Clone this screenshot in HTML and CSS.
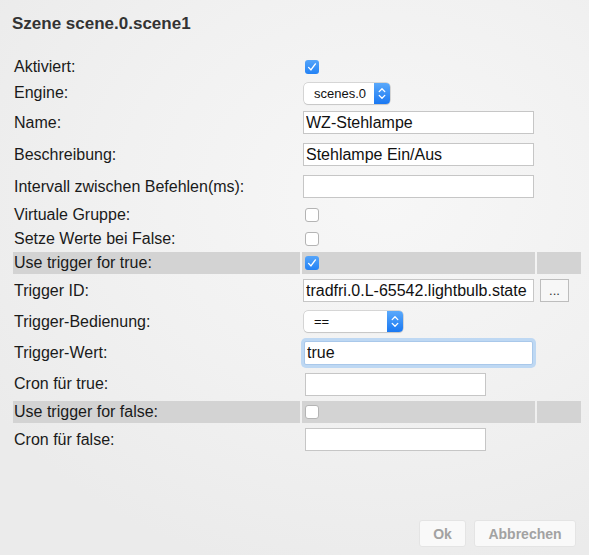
FILE: index.html
```html
<!DOCTYPE html>
<html lang="de">
<head>
<meta charset="utf-8">
<title>Szene scene.0.scene1</title>
<link rel="stylesheet" href="styles.css">
</head>
<body>
<div class="dialog">
  <h1 class="title">Szene scene.0.scene1</h1>
  <table class="form">
    <colgroup><col class="c-label"><col class="c-value"><col class="c-extra"></colgroup>
    <tr class="r22">
      <td class="label">Aktiviert:</td>
      <td><span class="cb checked"><svg viewBox="0 0 14 14" width="14" height="14"><path d="M3.6 7.4 L5.9 9.9 L10.4 3.9" fill="none" stroke="#fff" stroke-width="1.4" stroke-linecap="round" stroke-linejoin="round"/></svg></span></td>
      <td></td>
    </tr>
    <tr class="r26">
      <td class="label">Engine:</td>
      <td><div class="select w86"><span class="sel-text">scenes.0</span><span class="sel-arrow"><svg viewBox="0 0 16 21" width="16" height="21"><path d="M5.2 8.6 L8 5.8 L10.8 8.6 M5.2 12.4 L8 15.2 L10.8 12.4" fill="none" stroke="#fff" stroke-width="1.3" stroke-linecap="round" stroke-linejoin="round"/></svg></span></div></td>
      <td></td>
    </tr>
    <tr class="r29">
      <td class="label">Name:</td>
      <td><input class="text" type="text" value="WZ-Stehlampe"></td>
      <td></td>
    </tr>
    <tr class="r31">
      <td class="label">Beschreibung:</td>
      <td><input class="text" type="text" value="Stehlampe Ein/Aus"></td>
      <td></td>
    </tr>
    <tr class="r29">
      <td class="label">Intervall zwischen Befehlen(ms):</td>
      <td><input class="text" type="text" value=""></td>
      <td></td>
    </tr>
    <tr class="r23">
      <td class="label">Virtuale Gruppe:</td>
      <td><span class="cb"></span></td>
      <td></td>
    </tr>
    <tr class="r22">
      <td class="label">Setze Werte bei False:</td>
      <td><span class="cb"></span></td>
      <td></td>
    </tr>
    <tr class="r22 band">
      <td class="label">Use trigger for true:</td>
      <td><span class="cb checked"><svg viewBox="0 0 14 14" width="14" height="14"><path d="M3.6 7.4 L5.9 9.9 L10.4 3.9" fill="none" stroke="#fff" stroke-width="1.4" stroke-linecap="round" stroke-linejoin="round"/></svg></span></td>
      <td></td>
    </tr>
    <tr class="r29">
      <td class="label">Trigger ID:</td>
      <td><input class="text" type="text" value="tradfri.0.L-65542.lightbulb.state"></td>
      <td><button class="dots" type="button">...</button></td>
    </tr>
    <tr class="r29">
      <td class="label">Trigger-Bedienung:</td>
      <td><div class="select w99"><span class="sel-text">==</span><span class="sel-arrow"><svg viewBox="0 0 16 21" width="16" height="21"><path d="M5.2 8.6 L8 5.8 L10.8 8.6 M5.2 12.4 L8 15.2 L10.8 12.4" fill="none" stroke="#fff" stroke-width="1.3" stroke-linecap="round" stroke-linejoin="round"/></svg></span></div></td>
      <td></td>
    </tr>
    <tr class="r29">
      <td class="label">Trigger-Wert:</td>
      <td><input class="text focused" type="text" value="true"></td>
      <td></td>
    </tr>
    <tr class="r30">
      <td class="label">Cron für true:</td>
      <td><input class="text short" type="text" value=""></td>
      <td></td>
    </tr>
    <tr class="r22 band">
      <td class="label">Use trigger for false:</td>
      <td><span class="cb"></span></td>
      <td></td>
    </tr>
    <tr class="r29">
      <td class="label">Cron für false:</td>
      <td><input class="text short" type="text" value=""></td>
      <td></td>
    </tr>
  </table>
  <div class="footer">
    <button class="btn btn-ok" type="button">Ok</button>
    <button class="btn btn-cancel" type="button">Abbrechen</button>
  </div>
</div>
</body>
</html>
```

FILE: styles.css
```css
html, body {
  margin: 0;
  padding: 0;
  height: 100%;
}

body {
  font-family: "Liberation Sans", Arial, Helvetica, sans-serif;
  color: #1a1a1a;
  background: radial-gradient(ellipse 80% 70% at 65% 35%, #f7f7f7 0%, #f1f1f1 55%, #ebebeb 100%);
}

.dialog {
  height: 100vh;
  box-sizing: border-box;
  display: flex;
  flex-direction: column;
}

.title {
  margin: 0;
  padding: 14px 12px 0;
  font-size: 17px;
  line-height: 20px;
  font-weight: bold;
  color: #333;
}

.form {
  margin: 20px 0 0 11px;
  border-collapse: separate;
  border-spacing: 2px;
  table-layout: fixed;
  width: 572px;
}

.c-label { width: 287px; }
.c-value { width: 233px; }
.c-extra { width: 44px; }

.form td {
  padding: 0;
  vertical-align: middle;
}

.form td.label {
  padding: 0 1px;
  font-size: 16px;
  line-height: 18px;
  white-space: nowrap;
}

.r22 td { height: 22px; }
.r23 td { height: 23px; }
.r26 td { height: 26px; }
.r29 td { height: 29px; }
.r30 td { height: 30px; }
.r31 td { height: 31px; }

.band td { background: #d3d3d3; }

/* checkbox */
.cb {
  display: block;
  width: 14px;
  height: 14px;
  margin-left: 3px;
  box-sizing: border-box;
  border: 1px solid #b4b4b4;
  border-radius: 3px;
  background: #fff;
}

.cb svg { display: block; margin: -1px; }

.cb.checked {
  border: none;
  background: linear-gradient(#55a5fa, #2382f5);
}

.cb.checked svg { margin: 0; }

/* select */
.select {
  display: flex;
  height: 21px;
  margin-left: 2px;
  box-sizing: border-box;
  border-radius: 4px;
  background: #fff;
  box-shadow: 0 0 0 0.5px #b8b8b8, 0 1px 1px rgba(0, 0, 0, 0.12);
  overflow: hidden;
}

.w86 { width: 86px; }
.w99 { width: 99px; }

.sel-text {
  flex: 1;
  font-size: 13px;
  line-height: 21px;
  padding-left: 10px;
  color: #111;
}

.sel-arrow {
  width: 16px;
  height: 21px;
  background: linear-gradient(#5aa9fb, #1a78f2);
}

.sel-arrow svg { display: block; }

/* text inputs */
.text {
  display: block;
  box-sizing: border-box;
  width: 231px;
  height: 23px;
  margin: 0 0 0 1px;
  padding: 2px 2px;
  border: 1px solid #c6c6c6;
  background: #fff;
  font-family: "Liberation Sans", Arial, Helvetica, sans-serif;
  font-size: 16px;
  line-height: 17px;
  color: #111;
  outline: none;
}

.text.short {
  width: 181px;
  margin-left: 3px;
}

.text.focused {
  width: 229px;
  height: 24px;
  margin-left: 2px;
  border-color: #a9c8ea;
  border-radius: 2px;
  box-shadow: 0 0 0 3px #bed8f3;
}

.dots {
  display: block;
  width: 29px;
  height: 23px;
  margin-left: 3px;
  padding: 0 0 4px;
  box-sizing: border-box;
  border: 1px solid #bdbdbd;
  background: #f7f7f7;
  font-family: "Liberation Sans", Arial, sans-serif;
  font-size: 13px;
  line-height: 13px;
  color: #333;
  display: flex;
  align-items: flex-end;
  justify-content: center;
}

/* footer */
.footer {
  margin-top: auto;
  display: flex;
  justify-content: flex-end;
  gap: 8px;
  padding: 0 13px 8px;
}

.btn {
  height: 27px;
  box-sizing: border-box;
  border: 1px solid #e4e4e4;
  border-radius: 3px;
  background: #f9f9f9;
  font-family: "Liberation Sans", Arial, sans-serif;
  font-size: 14px;
  font-weight: bold;
  color: #a2a2a2;
  padding: 0;
}

.btn-ok { width: 47px; }
.btn-cancel { width: 102px; }
```
